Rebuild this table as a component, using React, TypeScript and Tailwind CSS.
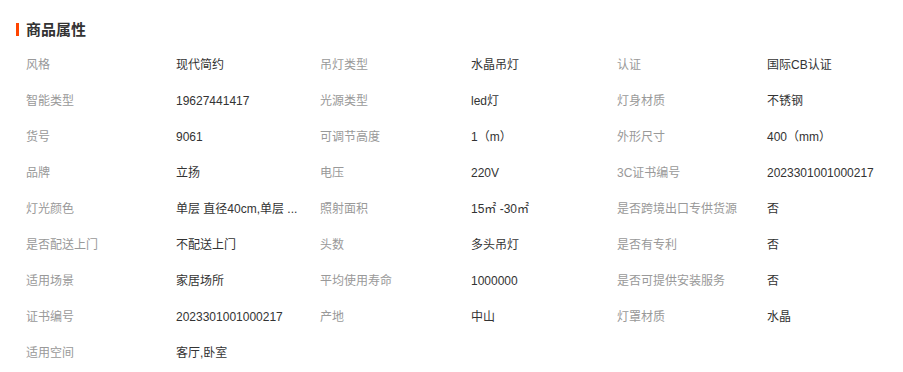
const rows: [string, string, string, string, string, string][] = [
  ["风格", "现代简约", "吊灯类型", "水晶吊灯", "认证", "国际CB认证"],
  ["智能类型", "19627441417", "光源类型", "led灯", "灯身材质", "不锈钢"],
  ["货号", "9061", "可调节高度", "1（m）", "外形尺寸", "400（mm）"],
  ["品牌", "立扬", "电压", "220V", "3C证书编号", "2023301001000217"],
  ["灯光颜色", "单层 直径40cm,单层 ...", "照射面积", "15㎡ -30㎡", "是否跨境出口专供货源", "否"],
  ["是否配送上门", "不配送上门", "头数", "多头吊灯", "是否有专利", "否"],
  ["适用场景", "家居场所", "平均使用寿命", "1000000", "是否可提供安装服务", "否"],
  ["证书编号", "2023301001000217", "产地", "中山", "灯罩材质", "水晶"],
  ["适用空间", "客厅,卧室", "", "", "", ""],
];

export default function App() {
  return (
    <div className="w-[903px] h-[372px] bg-white font-['Liberation_Sans','Noto_Sans_CJK_SC',sans-serif] overflow-hidden">
      <div className="flex items-center pl-[16px] pt-[20px] h-[38px]">
        <span className="w-[3px] h-[13px] bg-[#ff4400]" />
        <h2 className="ml-[7px] text-[15px] font-bold text-[#333] leading-none">商品属性</h2>
      </div>
      <div className="pl-[26px] pt-[9px] text-[12px]">
        {rows.map((r, i) => (
          <div key={i} className="grid grid-cols-[150px_144px_151px_146px_150px_1fr] h-[36px] items-center">
            {r.map((c, j) => (
              <div
                key={j}
                className={j % 2 === 0 ? "text-[#999] whitespace-nowrap" : "text-[#333] whitespace-nowrap"}
              >
                {c}
              </div>
            ))}
          </div>
        ))}
      </div>
    </div>
  );
}
